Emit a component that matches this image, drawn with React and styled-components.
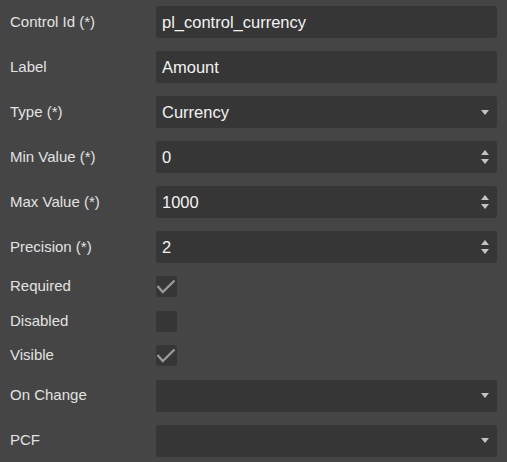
import React from 'react'
import styled, { createGlobalStyle } from 'styled-components'

const GlobalStyle = createGlobalStyle`
    html, body {
        margin: 0;
        padding: 0;
        background: #454545;
    }
    body {
        font-family: "Liberation Sans", Arial, sans-serif;
    }
`;

const fields = [
    { label: 'Control Id (*)', value: 'pl_control_currency' },
    { label: 'Label', value: 'Amount' },
    { label: 'Type (*)', value: 'Currency', kind: 'select' },
    { label: 'Min Value (*)', value: '0', kind: 'number' },
    { label: 'Max Value (*)', value: '1000', kind: 'number' },
    { label: 'Precision (*)', value: '2', kind: 'number' },
    { label: 'Required', checked: true, kind: 'check' },
    { label: 'Disabled', checked: false, kind: 'check' },
    { label: 'Visible', checked: true, kind: 'check' },
    { label: 'On Change', value: '', kind: 'select' },
    { label: 'PCF', value: '', kind: 'select' },
]

function Caret() {
    return (
        <svg width="8" height="5" viewBox="0 0 8 5">
            <path d="M0 0 L8 0 L4 5 Z" fill="#c4c4c4" />
        </svg>
    )
}

function Spin() {
    return (
        <svg width="8" height="14" viewBox="0 0 8 14">
            <path d="M4 0 L8 5 L0 5 Z" fill="#c4c4c4" />
            <path d="M0 9 L8 9 L4 14 Z" fill="#c4c4c4" />
        </svg>
    )
}

// check mark drawn over the whole 21px box
function Tick() {
    return (
        <svg width="21" height="21" viewBox="0 0 21 21">
            <path d="M1.5 10 L6.8 16 L18.5 4.5" fill="none" stroke="#9a9a9a" strokeWidth="2.3" />
        </svg>
    )
}

function App() {
    return (
        <>
            <GlobalStyle />
            <Form>
                {
                    fields.map((f) => {
                        if (f.kind === 'check') {
                            return (
                                <Row key={f.label} $compact>
                                    <Label>{f.label}</Label>
                                    <Box>{f.checked && <Tick />}</Box>
                                </Row>
                            )
                        }
                        return (
                            <Row key={f.label}>
                                <Label>{f.label}</Label>
                                <Field>
                                    <Value>{f.value}</Value>
                                    {f.kind === 'select' && <Caret />}
                                    {f.kind === 'number' && <Spin />}
                                </Field>
                            </Row>
                        )
                    })
                }
            </Form>
        </>
    )
}

const Form = styled.div`
    width: 507px;
    height: 462px;
    box-sizing: border-box;
    padding: 6px 10px 0 10px;
    display: flex;
    flex-direction: column;
    gap: 13px;
    overflow: hidden;
`;

const Row = styled.div`
    display: grid;
    grid-template-columns: 146px 1fr;
    align-items: center;
    height: ${props => props.$compact ? '21.5px' : '32px'};
`;

const Label = styled.div`
    font-size: 15px;
    line-height: 18px;
    color: #e2e2e2;
    white-space: nowrap;
    margin-top: -1px;
`;

const Field = styled.div`
    height: 32px;
    background: #363636;
    border-radius: 3px;
    display: flex;
    align-items: center;
    padding: 0 8px 0 6px;

    svg {
        flex-shrink: 0;
    }
`;

const Value = styled.div`
    flex: 1;
    font-size: 16.5px;
    line-height: 20px;
    color: #f2f2f2;
    margin-top: -1px;
`;

const Box = styled.div`
    width: 21px;
    height: 21px;
    background: #363636;
    border-radius: 3px;
    display: flex;
`;

export default App
